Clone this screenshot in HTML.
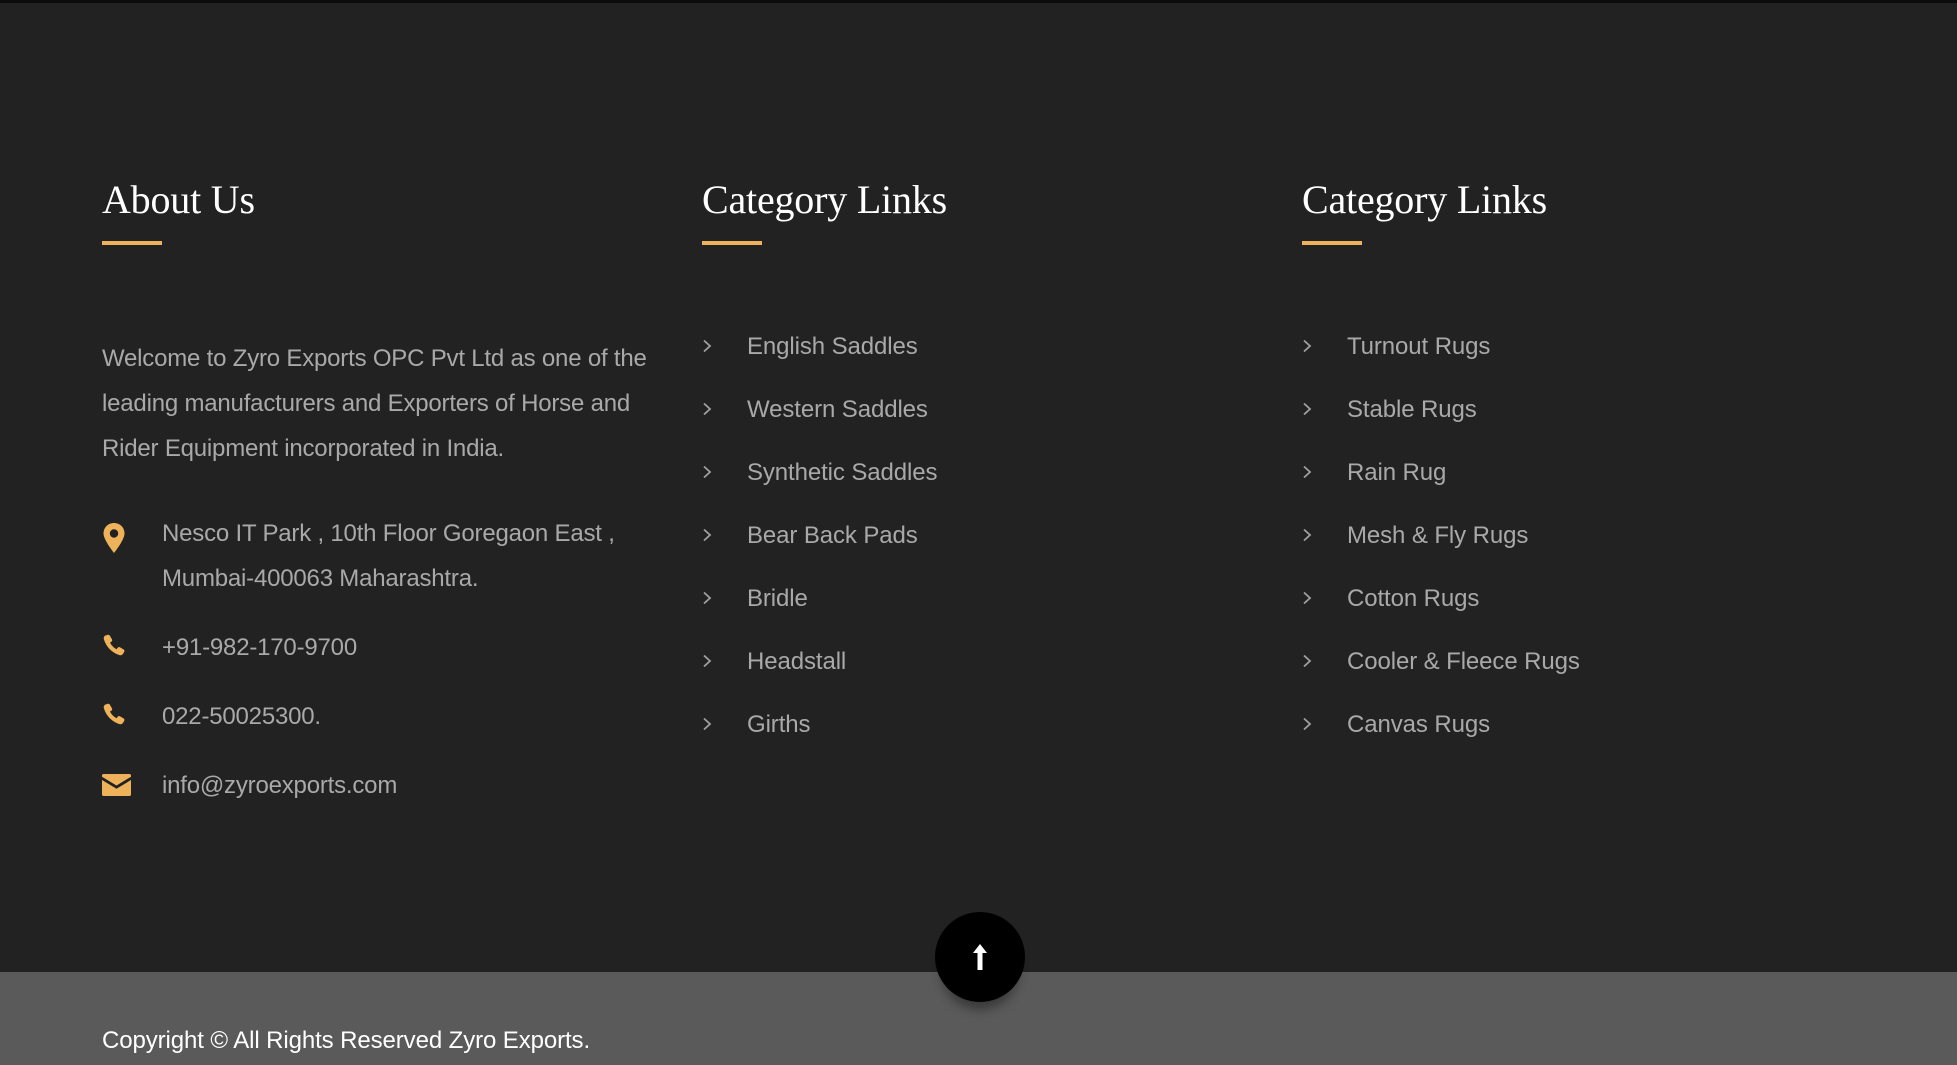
<!DOCTYPE html>
<html><head><meta charset="utf-8"><style>
*{margin:0;padding:0;box-sizing:border-box}
body{width:1957px;height:1065px;background:#222;position:relative;overflow:hidden;font-family:"Liberation Sans",sans-serif}
.top{position:absolute;left:0;top:0;width:100%;height:3px;background:#0c0c0c}
.abs{position:absolute;white-space:nowrap}
h2{position:absolute;font-family:"Liberation Serif",serif;font-weight:normal;font-size:40px;color:#fff;top:176px;letter-spacing:-0.2px}
.ul{position:absolute;top:241px;width:60px;height:4px;background:#eeb35a}
.p{color:#a9a9a9;font-size:24px;letter-spacing:-0.2px}
.lk{color:#a9a9a9;font-size:24px;letter-spacing:-0.1px}
.ch{position:absolute}
.bottom{position:absolute;left:0;top:972px;width:100%;height:93px;background:#5a5a5a}
.btn{position:absolute;left:935px;top:912px;width:90px;height:90px;border-radius:50%;background:#000;box-shadow:0 14px 10px -6px rgba(0,0,0,.35)}
</style></head><body>
<div class="top"></div>
<h2 style="left:102px">About Us</h2>
<h2 style="left:702px">Category Links</h2>
<h2 style="left:1302px">Category Links</h2>
<div class="ul" style="left:102px"></div>
<div class="ul" style="left:702px"></div>
<div class="ul" style="left:1302px"></div>

<div class="abs p" style="left:102px;top:345px">Welcome to Zyro Exports OPC Pvt Ltd as one of the</div>
<div class="abs p" style="left:102px;top:390px">leading manufacturers and Exporters of Horse and</div>
<div class="abs p" style="left:102px;top:435px">Rider Equipment incorporated in India.</div>

<svg class="abs" style="left:102px;top:522px" width="24" height="32" viewBox="0 0 24 32"><path d="M12 1C6 1 1.5 5.5 1.5 11.5 1.5 18 12 31 12 31S22.5 18 22.5 11.5C22.5 5.5 18 1 12 1z" fill="#eeb35a"/><circle cx="12" cy="11.5" r="4.2" fill="#222"/></svg>
<div class="abs p" style="left:162px;top:520px">Nesco IT Park , 10th Floor Goregaon East ,</div>
<div class="abs p" style="left:162px;top:565px">Mumbai-400063 Maharashtra.</div>

<svg class="abs" style="left:102px;top:634px" width="24" height="22" viewBox="0 0 24 24"><path d="M5 1c1-.6 2 0 2.6 1l2.2 3.8c.5 1 .2 2-.7 2.6l-1.4.9c1.4 3.2 4 5.8 7.2 7.3l.9-1.4c.6-.9 1.7-1.2 2.6-.7l3.8 2.2c1 .6 1.5 1.6 1 2.6l-1 1.7C21.3 23 19.6 23.5 18 23 10 20.6 3.5 14 1 6c-.5-1.6 0-3.3 1.3-4.2z" fill="#eeb35a"/></svg>
<div class="abs p" style="left:162px;top:634px">+91-982-170-9700</div>
<svg class="abs" style="left:102px;top:703px" width="24" height="22" viewBox="0 0 24 24"><path d="M5 1c1-.6 2 0 2.6 1l2.2 3.8c.5 1 .2 2-.7 2.6l-1.4.9c1.4 3.2 4 5.8 7.2 7.3l.9-1.4c.6-.9 1.7-1.2 2.6-.7l3.8 2.2c1 .6 1.5 1.6 1 2.6l-1 1.7C21.3 23 19.6 23.5 18 23 10 20.6 3.5 14 1 6c-.5-1.6 0-3.3 1.3-4.2z" fill="#eeb35a"/></svg>
<div class="abs p" style="left:162px;top:703px">022-50025300.</div>
<svg class="abs" style="left:102px;top:774px" width="29" height="22" viewBox="0 0 29 22"><path d="M0 1.5C0 .7.7 0 1.5 0h26c.8 0 1.5.7 1.5 1.5v1.2L14.5 11.5 0 2.7z" fill="#eeb35a"/><path d="M0 6l14.5 8.8L29 6v14.5c0 .8-.7 1.5-1.5 1.5h-26C.7 22 0 21.3 0 20.5z" fill="#eeb35a"/></svg>
<div class="abs p" style="left:162px;top:772px">info@zyroexports.com</div>

<svg width="0" height="0" style="position:absolute"><defs><symbol id="c" viewBox="0 0 10 14"><path d="M2 1.5L8 7 2 12.5" fill="none" stroke="#a0a0a0" stroke-width="1.8"/></symbol></defs></svg>

<svg class="ch" style="left:702px;top:339px" width="10" height="14"><use href="#c"/></svg><div class="abs lk" style="left:747px;top:333px">English Saddles</div>
<svg class="ch" style="left:702px;top:402px" width="10" height="14"><use href="#c"/></svg><div class="abs lk" style="left:747px;top:396px">Western Saddles</div>
<svg class="ch" style="left:702px;top:465px" width="10" height="14"><use href="#c"/></svg><div class="abs lk" style="left:747px;top:459px">Synthetic Saddles</div>
<svg class="ch" style="left:702px;top:528px" width="10" height="14"><use href="#c"/></svg><div class="abs lk" style="left:747px;top:522px">Bear Back Pads</div>
<svg class="ch" style="left:702px;top:591px" width="10" height="14"><use href="#c"/></svg><div class="abs lk" style="left:747px;top:585px">Bridle</div>
<svg class="ch" style="left:702px;top:654px" width="10" height="14"><use href="#c"/></svg><div class="abs lk" style="left:747px;top:648px">Headstall</div>
<svg class="ch" style="left:702px;top:717px" width="10" height="14"><use href="#c"/></svg><div class="abs lk" style="left:747px;top:711px">Girths</div>

<svg class="ch" style="left:1302px;top:339px" width="10" height="14"><use href="#c"/></svg><div class="abs lk" style="left:1347px;top:333px">Turnout Rugs</div>
<svg class="ch" style="left:1302px;top:402px" width="10" height="14"><use href="#c"/></svg><div class="abs lk" style="left:1347px;top:396px">Stable Rugs</div>
<svg class="ch" style="left:1302px;top:465px" width="10" height="14"><use href="#c"/></svg><div class="abs lk" style="left:1347px;top:459px">Rain Rug</div>
<svg class="ch" style="left:1302px;top:528px" width="10" height="14"><use href="#c"/></svg><div class="abs lk" style="left:1347px;top:522px">Mesh &amp; Fly Rugs</div>
<svg class="ch" style="left:1302px;top:591px" width="10" height="14"><use href="#c"/></svg><div class="abs lk" style="left:1347px;top:585px">Cotton Rugs</div>
<svg class="ch" style="left:1302px;top:654px" width="10" height="14"><use href="#c"/></svg><div class="abs lk" style="left:1347px;top:648px">Cooler &amp; Fleece Rugs</div>
<svg class="ch" style="left:1302px;top:717px" width="10" height="14"><use href="#c"/></svg><div class="abs lk" style="left:1347px;top:711px">Canvas Rugs</div>

<div class="bottom"></div>
<div class="abs" style="left:102px;top:1027px;color:#fff;font-size:24px;letter-spacing:-0.1px">Copyright © All Rights Reserved Zyro Exports.</div>
<div class="btn"><svg style="position:absolute;left:37px;top:31px" width="16" height="28" viewBox="0 0 16 28"><path d="M8 1L1 10h4.5v17h5V10H15z" fill="#fff"/></svg></div>
</body></html>
